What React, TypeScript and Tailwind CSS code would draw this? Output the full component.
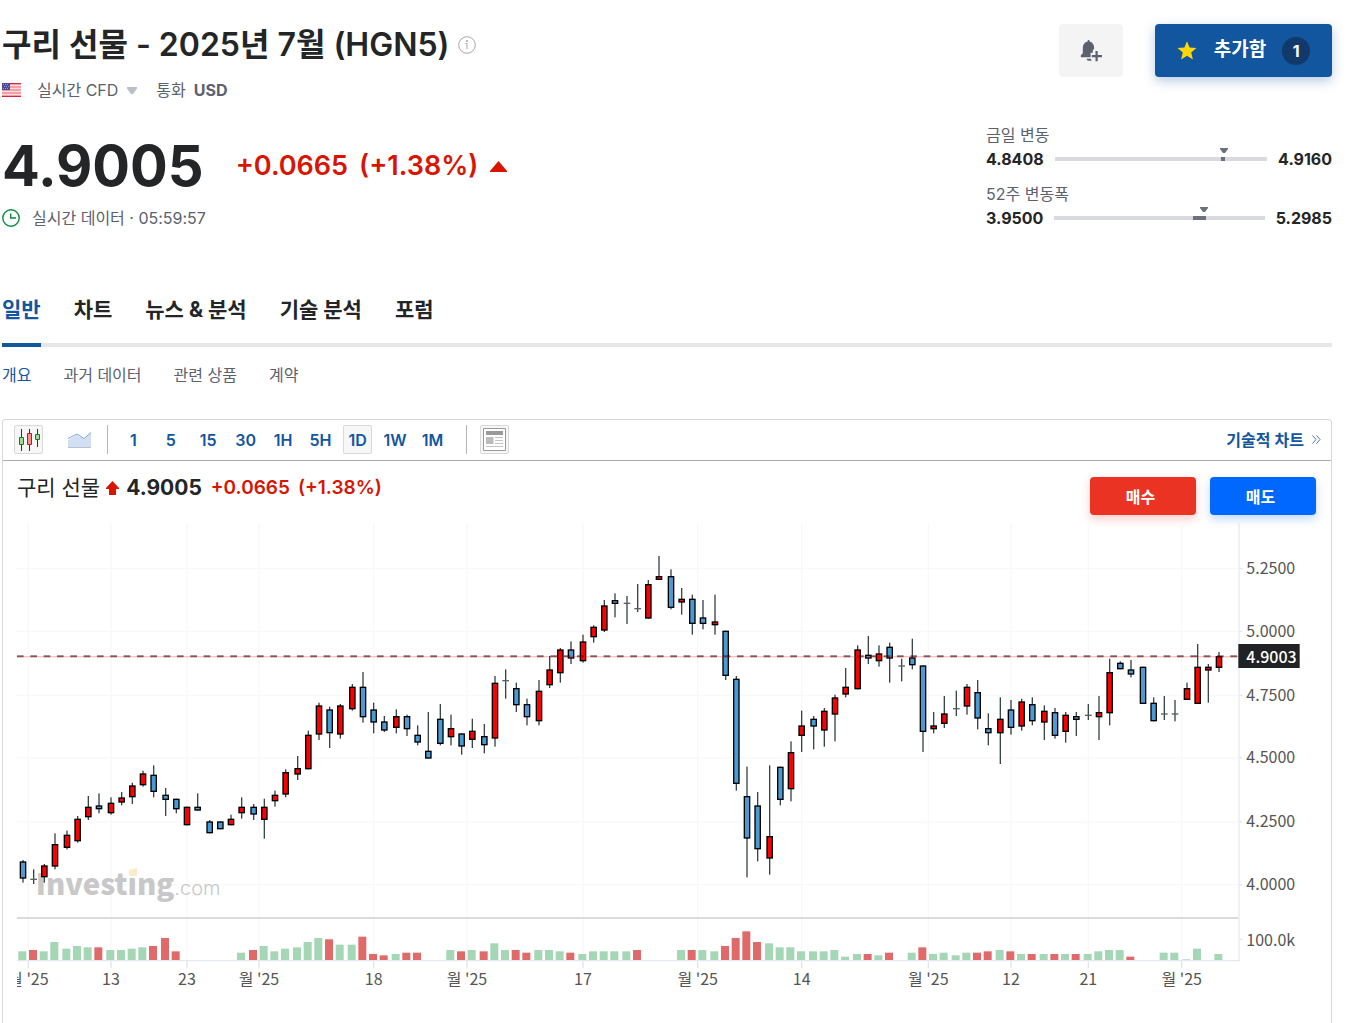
import React from "react";

type Tone = "u" | "d" | "x";
type Candle = [x: number, high: number, top: number, bottom: number, low: number, tone: Tone];
type Bar = [x: number, height: number, tone: "g" | "r"];

/* u: up (red), d: down (blue), x: open and close are equal */
const candles: Candle[] = [
  [4, 255, 256, 269, 272, "d"], [12, 262, 269, 270, 273, "x"], [20, 258, 259, 268, 272, "u"],
  [28, 235, 243, 260, 262, "u"], [37, 233, 236, 246, 247, "u"], [45, 222, 224, 241, 242, "u"],
  [53, 207, 215, 223, 225, "u"], [61, 205, 214, 217, 220, "d"], [70, 208, 212, 220, 221, "u"],
  [78, 204, 208, 212, 214, "u"], [86, 197, 199, 208, 213, "u"], [94, 188, 190, 199, 200, "u"],
  [102, 184, 191, 204, 208, "d"], [111, 201, 206, 210, 222, "d"], [119, 209, 209, 217, 220, "d"],
  [127, 215, 215, 229, 229, "u"], [135, 205, 215, 218, 218, "d"], [144, 225, 226, 235, 235, "d"],
  [152, 226, 226, 232, 232, "d"], [160, 221, 224, 229, 229, "u"], [168, 208, 215, 220, 224, "u"],
  [177, 213, 215, 221, 225, "d"], [185, 209, 215, 225, 239, "u"], [193, 203, 206, 211, 215, "u"],
  [201, 187, 189, 206, 208, "u"], [210, 177, 186, 191, 195, "u"], [218, 158, 161, 187, 187, "u"],
  [226, 137, 139, 161, 165, "u"], [234, 140, 142, 160, 171, "d"], [242, 138, 139, 161, 164, "u"],
  [251, 123, 125, 142, 143, "u"], [259, 114, 125, 148, 152, "d"], [267, 137, 142, 152, 160, "d"],
  [275, 147, 151, 158, 159, "d"], [284, 142, 147, 156, 160, "u"], [292, 146, 147, 157, 162, "d"],
  [300, 154, 161, 167, 169, "d"], [308, 144, 173, 179, 179, "d"], [317, 138, 149, 168, 169, "d"],
  [325, 146, 156, 163, 169, "u"], [333, 160, 160, 170, 176, "d"], [341, 149, 158, 165, 171, "u"],
  [350, 153, 162, 169, 175, "d"], [358, 117, 122, 164, 170, "u"], [366, 112, 120, 121, 134, "x"],
  [374, 122, 126, 139, 144, "d"], [382, 134, 138, 148, 154, "d"], [391, 120, 128, 151, 154, "u"],
  [399, 102, 112, 124, 126, "u"], [407, 96, 97, 115, 122, "u"], [415, 91, 97, 104, 108, "d"],
  [424, 86, 91, 106, 107, "u"], [432, 79, 80, 88, 92, "u"], [440, 60, 64, 83, 84, "u"],
  [448, 55, 60, 63, 73, "d"], [457, 57, 62, 63, 78, "x"], [465, 48, 66, 67, 69, "x"],
  [473, 45, 48, 74, 74, "u"], [481, 27, 42, 45, 45, "u"], [490, 37, 42, 66, 67, "d"],
  [498, 51, 59, 62, 71, "u"], [506, 56, 59, 78, 86, "d"], [514, 60, 73, 78, 82, "d"],
  [523, 56, 76, 79, 86, "u"], [531, 83, 83, 117, 120, "d"], [539, 117, 119, 198, 203, "d"],
  [547, 185, 207, 239, 268, "d"], [555, 204, 214, 247, 256, "d"], [564, 184, 237, 254, 266, "u"],
  [572, 185, 185, 210, 214, "d"], [580, 166, 174, 202, 211, "u"], [588, 143, 154, 162, 174, "u"],
  [597, 147, 149, 155, 172, "d"], [605, 141, 143, 158, 170, "u"], [613, 131, 133, 146, 166, "u"],
  [621, 111, 125, 131, 133, "u"], [630, 94, 97, 127, 127, "u"], [638, 87, 101, 104, 108, "d"],
  [646, 94, 100, 106, 110, "u"], [654, 92, 95, 104, 122, "d"], [663, 104, 109, 110, 121, "x"],
  [671, 89, 103, 109, 112, "d"], [679, 109, 109, 159, 174, "d"], [687, 144, 154, 157, 160, "u"],
  [695, 132, 145, 153, 156, "u"], [704, 128, 141, 142, 147, "x"], [712, 123, 125, 140, 146, "u"],
  [720, 120, 129, 149, 157, "d"], [728, 145, 156, 160, 169, "d"], [737, 133, 149, 160, 183, "u"],
  [745, 135, 142, 156, 161, "d"], [753, 134, 136, 155, 158, "u"], [761, 133, 138, 151, 154, "d"],
  [770, 139, 143, 152, 165, "u"], [778, 141, 144, 162, 164, "d"], [786, 144, 146, 159, 167, "u"],
  [794, 144, 147, 150, 162, "d"], [803, 138, 146, 147, 150, "x"], [811, 132, 144, 148, 165, "u"],
  [819, 104, 114, 145, 154, "u"], [827, 106, 107, 112, 112, "d"], [835, 105, 112, 116, 118, "d"],
  [844, 110, 110, 138, 138, "d"], [852, 133, 137, 151, 151, "d"], [860, 132, 145, 146, 150, "x"],
  [868, 135, 145, 146, 151, "x"], [877, 122, 126, 135, 135, "u"], [885, 93, 110, 138, 138, "u"],
  [893, 108, 110, 113, 137, "u"], [901, 99, 102, 111, 114, "u"],
];

const volumes: Bar[] = [
  [4, 7, "g"], [12, 8, "r"], [20, 7, "g"], [28, 14, "g"], [37, 9, "g"], [45, 11, "g"], [53, 10, "g"],
  [61, 10, "r"], [70, 8, "g"], [78, 8, "g"], [86, 9, "g"], [94, 10, "g"], [102, 11, "r"], [111, 17, "r"],
  [119, 7, "r"], [168, 6, "g"], [177, 8, "r"], [185, 11, "g"], [193, 7, "g"], [201, 9, "g"], [210, 10, "g"],
  [218, 14, "g"], [226, 17, "g"], [234, 16, "r"], [242, 12, "g"], [251, 12, "g"], [259, 18, "r"],
  [267, 5, "r"], [275, 4, "r"], [284, 5, "g"], [292, 6, "r"], [300, 6, "r"], [325, 8, "g"], [333, 7, "r"],
  [341, 8, "g"], [350, 7, "r"], [358, 13, "g"], [366, 8, "g"], [374, 8, "r"], [382, 6, "r"], [391, 8, "g"],
  [399, 8, "g"], [407, 7, "g"], [415, 6, "r"], [424, 5, "g"], [432, 7, "g"], [440, 7, "g"], [448, 7, "g"],
  [457, 7, "g"], [465, 8, "r"], [498, 8, "g"], [506, 8, "r"], [514, 8, "g"], [523, 7, "g"], [531, 11, "r"],
  [539, 17, "r"], [547, 22, "r"], [555, 14, "r"], [564, 13, "g"], [572, 10, "g"], [580, 10, "g"],
  [588, 7, "g"], [597, 7, "g"], [605, 7, "g"], [613, 8, "g"], [621, 3, "g"], [630, 5, "g"], [638, 5, "r"],
  [646, 4, "g"], [654, 6, "r"], [671, 6, "g"], [679, 10, "r"], [687, 5, "g"], [695, 6, "g"], [704, 4, "g"],
  [712, 6, "g"], [720, 6, "r"], [728, 7, "r"], [737, 8, "g"], [745, 7, "r"], [753, 5, "g"], [761, 5, "r"],
  [770, 5, "g"], [778, 5, "r"], [786, 5, "g"], [794, 5, "r"], [803, 5, "g"], [811, 7, "g"], [819, 8, "g"],
  [827, 8, "g"], [835, 3, "r"], [860, 6, "g"], [868, 6, "g"], [877, 1, "g"], [885, 9, "g"], [901, 5, "g"],
];

const dates: [number, string][] = [
  [8, "월 '25"], [70, "13"], [127, "23"], [181, "월 '25"], [267, "18"], [337, "월 '25"], [424, "17"],
  [510, "월 '25"], [588, "14"], [683, "월 '25"], [745, "12"], [803, "21"], [873, "월 '25"],
];

const prices: [number, string][] = [
  [36, "5.2500"], [83, "5.0000"], [131, "4.7500"], [178, "4.5000"], [226, "4.2500"], [273, "4.0000"],
];

function PriceChart() {
  return (
    <svg
      viewBox="0 0 975 360"
      className="block h-auto w-full font-['Noto_Sans_CJK_KR','Noto_Sans',sans-serif] text-[12px]"
      role="img"
      aria-label="구리 선물 차트"
    >
      {dates.map(([x]) => (
        <g key={x}>
          <rect x={x} y="2" width="1" height="328" fill="#f8f8f9" />
          <rect x={x} y="331" width="1" height="5" fill="#dfe3ea" />
        </g>
      ))}
      {prices.map(([y]) => (
        <g key={y}>
          <rect x="0" y={y} width="916" height="1" fill="#f8f8f9" />
          <rect x="917" y={y} width="2" height="1" fill="#e3e7ee" />
        </g>
      ))}
      <rect x="917" y="314" width="2" height="1" fill="#e3e7ee" />

      <text x="14" y="281" fontSize="22" fontWeight="900" fill="#c8c8c8">
        Investing
        <tspan x="118" fontSize="15" fontFamily="Inter, sans-serif" fontWeight="300">
          .com
        </tspan>
      </text>
      <path d="M84 262.500L90 261v6h-6z" fill="#fdebc8" />

      <rect x="0" y="298" width="916" height="1" fill="#c9c9c9" />
      {volumes.map(([x, h, tone]) => (
        <rect key={x} x={x - 3} y={330.5 - h} width="6" height={h} fill={tone === "g" ? "#a5d6b5" : "#e06a6a"} />
      ))}
      <rect x="0" y="330" width="917" height="1" fill="#e6eaf0" />
      <rect x="916" y="2" width="1" height="329" fill="#e6eaf0" />

      {candles.map(([x, high, top, bottom, low, tone]) => (
        <g key={x}>
          <rect x={x} y={high} width="1" height={low - high} fill="#3a4547" />
          {tone === "x" ? (
            <rect x={x - 2} y={top} width="5" height="1" fill="#5a6364" />
          ) : (
            <rect
              x={x - 1.5}
              y={top + 0.5}
              width="4"
              height={bottom - top - 1}
              fill={tone === "u" ? "#fc0000" : "#4a9ad4"}
              stroke="#000"
            />
          )}
        </g>
      ))}

      <rect x="0" y="102" width="916" height="1" fill="#ff0000" fillOpacity="0.25" />
      <path d="M0 102.200H916" stroke="#3b0a0a" strokeWidth="1.400" strokeOpacity="0.6" strokeDasharray="5 5" />

      {dates.map(([x, label]) => (
        <text key={x} x={x + 0.5} y="349" textAnchor="middle" fill="#555">
          {label}
        </text>
      ))}
      {prices.map(([y, label]) => (
        <text key={y} x="922" y={y + 4.5} fill="#555">
          {label}
        </text>
      ))}
      <text x="922" y="319.500" fill="#555">
        100.0k
      </text>
      <rect x="916" y="93" width="46" height="18" fill="#212224" />
      <text x="922" y="107" fill="#fff" fontWeight="500">
        4.9003
      </text>
    </svg>
  );
}

function UsFlag() {
  return (
    <svg viewBox="0 0 19 14" className="h-3.5 w-[19px]" aria-hidden="true">
      <path fill="#f3a0a6" d="M0 0h19v14H0z" />
      <path stroke="#f7dde0" d="M0 2.500h19M0 5.500h19M0 8.500h19M0 11.500h19" />
      <path stroke="#d6273f" d="M0 .5h19M0 13.500h19" />
      <path fill="#4a4a94" d="M0 0h8v7H0z" />
      <path stroke="#9a9cc9" strokeDasharray="1 1" d="M1 1.500h6M2 3.500h6M1 5.500h6" />
    </svg>
  );
}

function RangeRow({ id, label, low, high, mark, from, to }: {
  id: string; label: string; low: string; high: string; mark: number; from: number; to: number;
}) {
  return (
    <div>
      <div id={id} className="h-5 text-base leading-5 text-[#5b616e]">{label}</div>
      <div aria-labelledby={id} role="group" className="mt-1 flex h-5 items-center gap-[11px] text-base leading-5 font-bold text-[#232526]">
        <span>{low}</span>
        <div className="relative h-1 flex-1 bg-[#d9dae0]">
          <div className="absolute inset-y-0 bg-[#6a707c]" style={{ left: `${from}%`, width: `${to - from}%` }} />
          <svg viewBox="0 0 8 5" className="absolute -top-[9px] h-[5px] w-2 -translate-x-1/2" style={{ left: `${mark}%` }} aria-hidden="true">
            <path d="M0 0h8v1L5 5H3L0 1z" fill="#6a707c" />
          </svg>
        </div>
        <span>{high}</span>
      </div>
    </div>
  );
}

const tabs = ["일반", "차트", "뉴스 & 분석", "기술 분석", "포럼"];
const subTabs = ["개요", "과거 데이터", "관련 상품", "계약"];
const intervals = ["1", "5", "15", "30", "1H", "5H", "1D", "1W", "1M"];

export default function App() {
  return (
    <main className="flex min-h-screen flex-col bg-white pr-[39px] pl-0.5 font-[Inter,'Noto_Sans_CJK_KR',sans-serif] text-[#232526]">
      <header className="flex justify-between pt-6">
        <div>
          <div className="flex h-[42px] items-center gap-2">
            <h1 className="text-[32px] leading-10 font-semibold">구리 선물 - 2025년 7월 (HGN5)</h1>
            <button aria-label="정보">
              <svg viewBox="0 0 18 18" className="size-[18px]" fill="none" stroke="#a6a6a6" aria-hidden="true">
                <circle cx="9" cy="9" r="8.300" />
                <path d="M7.500 7.500H9V13" />
                <circle cx="9" cy="5" r=".6" fill="#a6a6a6" />
              </svg>
            </button>
          </div>
          <div className="mt-3.5 flex h-5 items-center text-base leading-5 text-[#5b616e]">
            <UsFlag />
            <button className="ml-4 flex items-center gap-[9px]">
              실시간 CFD
              <svg viewBox="0 0 10 7" className="h-[7px] w-2.5" aria-hidden="true">
                <path d="M0 0h10v1.500L6 7H4L0 1.500z" fill="#b9c0c9" />
              </svg>
            </button>
            <span className="ml-[19px]">통화</span>
            <span className="ml-2 font-bold">USD</span>
          </div>
          <div className="mt-9 flex h-[60px] items-center">
            <span className="text-[56px] leading-[60px] font-bold">4.9005</span>
            <span className="ml-8 text-[27px] leading-8 font-semibold text-[#d91400]">+0.0665</span>
            <span className="ml-[11px] text-[27px] leading-8 font-semibold text-[#d91400]">(+1.38%)</span>
            <svg viewBox="0 0 17 11" className="ml-3 h-[11px] w-[17px]" aria-hidden="true">
              <path d="M8.500 0L17 10v1H0v-1z" fill="#d91400" />
            </svg>
          </div>
          <div className="mt-3 flex h-5 items-center gap-3 text-base leading-5 text-[#5b616e]">
            <svg viewBox="0 0 18 18" className="size-[18px]" fill="none" stroke="#0f8a3c" strokeWidth="1.400" aria-hidden="true">
              <circle cx="9" cy="9" r="8.200" />
              <path d="M8.700 4.500V9H14" />
            </svg>
            <span>실시간 데이터 · 05:59:57</span>
          </div>
        </div>

        <div className="w-[346px]">
          <div className="flex justify-end gap-8">
            <button aria-label="알림 추가" className="flex h-[53px] w-16 items-center justify-center rounded bg-[#f4f4f4]">
              <svg viewBox="0 0 22 22" className="size-[22px]" fill="#5b616e" aria-hidden="true">
                <path d="M7.600 1.500V.8Q7.600 0 8.600 0T9.600.8V1.500C12.600 2.200 14 4.500 14.100 7.500V9.600H12.800V12.800H10.600V17.200H.8V15.200L2.800 13.200V7.500C2.900 4.500 4.500 2.200 7.600 1.500zM6.500 18.800h4.200l1 2H8.400Q6.900 20.800 6.500 18.800z" />
                <path d="M15.500 11h2.200v4h4.300v2.200h-4.300v4h-2.200v-4h-3.700V15h3.700z" />
              </svg>
            </button>
            <button className="flex h-[53px] w-[177px] items-center justify-center rounded bg-[#1256a0] text-white shadow-[0_4px_12px_rgba(18,86,160,0.3)]">
              <svg viewBox="0 0 20 19" className="h-[19px] w-5" aria-hidden="true">
                <path d="M10 .3l2.600 6.300 6.900.5-5.300 4.400 1.700 6.900-5.900-3.700-5.900 3.700 1.700-6.900L.5 7.100l6.900-.5z" fill="#ffd60a" />
              </svg>
              <span className="mr-4 ml-[17px] pb-0.5 text-[19px] leading-6 font-bold">추가함</span>
              <span className="flex size-7 items-center justify-center rounded-full bg-[#113a6b] text-base font-bold">1</span>
            </button>
          </div>
          <div className="mt-12 flex flex-col gap-[15px]">
            <RangeRow id="day" label="금일 변동" low="4.8408" high="4.9160" mark={79.5} from={78.500} to={80} />
            <RangeRow id="year" label="52주 변동폭" low="3.9500" high="5.2985" mark={71} from={66} to={72} />
          </div>
        </div>
      </header>

      <nav className="mt-[66px] flex gap-[33px] border-b-4 border-[#e6e7e9] text-[21px] leading-8 font-bold">
        {tabs.map((tab, i) => (
          <a
            key={tab}
            href="#"
            className={i === 0 ? "-mb-1 border-b-4 border-[#1256a0] pb-[17px] text-[#1256a0]" : "pb-[17px]"}
          >
            {tab}
          </a>
        ))}
      </nav>
      <nav className="mt-[18px] flex gap-8 text-base leading-5 text-[#5b616e]">
        {subTabs.map((tab, i) => (
          <a key={tab} href="#" className={i === 0 ? "text-[#1256a0]" : ""}>
            {tab}
          </a>
        ))}
      </nav>

      <section className="mt-[34px] flex-1 rounded-t border border-b-0 border-[#d9d9d9]">
        <div className="flex h-[41px] items-start border-b border-[#adadad] pt-[5px] pr-2.5 pl-[11px] text-base font-semibold text-[#1256a0]">
          <button aria-label="캔들 차트" className="flex size-[29px] items-center justify-center rounded-xs border border-[#d9d9d9] bg-[#f7f7f7]">
            <svg viewBox="0 0 22 22" className="size-[22px]" aria-hidden="true">
              <path stroke="#333" d="M3.500 0v22M11.500 0v22M19.500 0v18" />
              <path fill="#a3d9a0" stroke="#1c7c14" d="M1.500 8.500h4v7h-4zM17.500 5.500h4v5h-4z" />
              <path fill="#ff9090" stroke="#c01818" d="M9.500 4.500h4v11h-4z" />
            </svg>
          </button>
          <button aria-label="영역 차트" className="ml-[22px] flex size-[29px] items-center justify-center">
            <svg viewBox="0 0 23 16" className="h-4 w-[23px]" aria-hidden="true">
              <path d="M0 8l9-5 7 4 7-6v15H0z" fill="#d3dff2" />
              <path d="M0 6.500L9 2l7 4.500 7-6" fill="none" stroke="#7ea1d2" />
              <path d="M0 15.500h23" stroke="#b9c2d4" />
            </svg>
          </button>
          <span className="ml-[13px] h-[29px] w-px bg-[#b5b5b5]" />
          <div className="ml-[11px] flex w-[328px] justify-between">
            {intervals.map((item) => (
              <button
                key={item}
                className={
                  item === "1D"
                    ? "flex size-[29px] items-center justify-center rounded-xs border border-[#d9d9d9] bg-[#f7f7f7]"
                    : "flex size-[29px] items-center justify-center"
                }
              >
                {item}
              </button>
            ))}
          </div>
          <span className="ml-[19px] h-[29px] w-px bg-[#b5b5b5]" />
          <button aria-label="뉴스" className="ml-[13px] flex size-[29px] items-center justify-center rounded-xs border border-[#d9d9d9] bg-[#f7f7f7]">
            <svg viewBox="0 0 23 23" className="size-[23px]" aria-hidden="true">
              <path d="M.5.500h22v22H.5z" fill="#fff" stroke="#999" />
              <path d="M3 3h17v4H3z" fill="#9a9a9a" />
              <path d="M3 9h7.500v7H3z" fill="#bcbcbc" />
              <path d="M12 9.500h8M12 12.500h8M12 15.500h8M3 18.500h17" stroke="#c4c4c4" />
            </svg>
          </button>
          <a href="#" className="ml-auto flex h-[29px] items-center gap-2">
            기술적 차트
            <svg viewBox="0 0 9 9" className="size-[9px]" fill="none" stroke="#4a78b5" aria-hidden="true">
              <path d="M.5.500l3.500 4-3.500 4M4.500.500l3.500 4-3.500 4" />
            </svg>
          </a>
        </div>
        <div className="pr-3.5 pl-3.5">
          <div className="flex h-[59px] items-start justify-between pt-4">
            <div className="flex h-[22px] items-center leading-[22px]">
              <h2 className="text-[21px]">구리 선물</h2>
              <svg viewBox="0 0 13 14" className="ml-1.5 h-3.5 w-[13px]" aria-hidden="true">
                <path d="M6.500 0L13 7v1h-3v6H3V8H0V7z" fill="#d91400" />
              </svg>
              <span className="ml-[7px] text-[21px] font-bold">4.9005</span>
              <span className="ml-[9px] text-[19px] font-semibold text-[#d91400]">+0.0665</span>
              <span className="ml-2 text-[19px] font-semibold text-[#d91400]">(+1.38%)</span>
            </div>
            <div className="flex gap-3.5 pr-px text-base font-bold text-white">
              <button className="h-[38px] w-[106px] rounded bg-[#ea3323] pt-0.5 pr-[5px] shadow-[0_4px_10px_rgba(234,51,35,0.25)]">매수</button>
              <button className="h-[38px] w-[106px] rounded bg-[#0068ff] pt-0.5 pr-[5px] shadow-[0_4px_10px_rgba(0,104,255,0.25)]">매도</button>
            </div>
          </div>
          <PriceChart />
        </div>
      </section>
    </main>
  );
}
